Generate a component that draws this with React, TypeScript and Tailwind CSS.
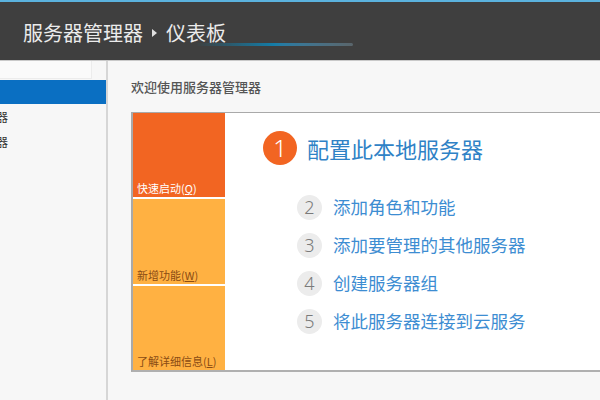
const cjk = { fontFamily: '"Noto Sans CJK SC", "Noto Sans", sans-serif' };

const steps = [
  { n: 2, label: '添加角色和功能' },
  { n: 3, label: '添加要管理的其他服务器' },
  { n: 4, label: '创建服务器组' },
  { n: 5, label: '将此服务器连接到云服务' },
];

function Tile({ label, hotkey, dark }: { label: string; hotkey: string; dark?: boolean }) {
  return (
    <div
      className={`flex-1 flex items-end px-[4px] pb-[2px] text-[11px] leading-[14px] ${
        dark ? 'bg-[#f26522] text-white' : 'bg-[#ffb142] text-[#8a4c14]'
      }`}
    >
      <span>
        {label}(<span className="underline">{hotkey}</span>)
      </span>
    </div>
  );
}

export default function App() {
  return (
    <div className="w-[600px] h-[400px] overflow-hidden bg-[#f7f7f7] flex flex-col" style={cjk}>
      {/* top accent */}
      <div className="h-[2px] bg-[#5bb2de]" />

      {/* Header */}
      <header className="h-[59px] bg-[#3f3f3f] border-b border-[#c9c9c9] flex items-center pl-[23px] pt-[4px]">
        <div className="relative flex items-center text-[20px] text-[#ebebeb] leading-none">
          <span>服务器管理器</span>
          <svg width="5" height="8" viewBox="0 0 5 8" className="mx-[9px]">
            <path d="M0 0 L5 4 L0 8 Z" fill="#e0e0e0" />
          </svg>
          <span>仪表板</span>
          <div className="absolute left-[172px] top-[20px] w-[158px] h-[3px] rounded-full bg-gradient-to-r from-transparent via-[#0f84b4] to-[#5d6a70] blur-[0.6px] opacity-90" />
        </div>
      </header>

      <div className="flex flex-1 min-h-0">
        {/* Sidebar */}
        <aside className="w-[108px] shrink-0 border-r-2 border-[#d6d6d6] overflow-hidden">
          <div className="h-[18px] w-[92px] bg-[#fafafa] border-r border-b border-[#ececec]" />
          <div className="h-[24px] mt-[1px] bg-[#0a6fc2]" />
          <div className="h-[25px] flex items-center text-[12px] text-[#333] whitespace-nowrap">
            <span className="-ml-[52px]">本地服务器</span>
          </div>
          <div className="h-[25px] flex items-center text-[12px] text-[#333] whitespace-nowrap">
            <span className="-ml-[52px]">所有服务器</span>
          </div>
        </aside>

        {/* Main */}
        <main className="flex-1 min-w-0 overflow-hidden pl-[23px] pt-[17px]">
          <div className="text-[13px] leading-[18px] text-[#555] font-medium">欢迎使用服务器管理器</div>

          <div className="mt-[16px] w-[520px] h-[260px] bg-white border-t border-l-2 border-b-2 border-t-[#a9a9a9] border-l-[#a9a9a9] border-b-[#b0b0b0] flex">
            <div className="w-[92px] flex flex-col gap-[2px]">
              <Tile label="快速启动" hotkey="Q" dark />
              <Tile label="新增功能" hotkey="W" />
              <Tile label="了解详细信息" hotkey="L" />
            </div>

            <div className="flex flex-col pl-[38px] pt-[18px]">
              <div className="h-[34px] flex items-center gap-[10px]">
                <div className="w-[34px] h-[34px] rounded-full bg-[#f26522] text-white flex items-center justify-center text-[24px] font-light" style={{ fontFamily: '"Noto Sans", sans-serif' }}>
                  1
                </div>
                <span className="text-[22px] text-[#2f82c6] leading-none">配置此本地服务器</span>
              </div>

              <div className="mt-[23px] ml-[34px] flex flex-col">
                {steps.map((s) => (
                  <div key={s.n} className="h-[38px] flex items-center gap-[11px]">
                    <div className="w-[25px] h-[25px] rounded-full bg-[#ececec] text-[#7a7a7a] flex items-center justify-center text-[18px] font-light" style={{ fontFamily: '"Noto Sans", sans-serif' }}>
                      {s.n}
                    </div>
                    <span className="text-[17.5px] text-[#3d8dd2] leading-none">{s.label}</span>
                  </div>
                ))}
              </div>
            </div>
          </div>
        </main>
      </div>
    </div>
  );
}
